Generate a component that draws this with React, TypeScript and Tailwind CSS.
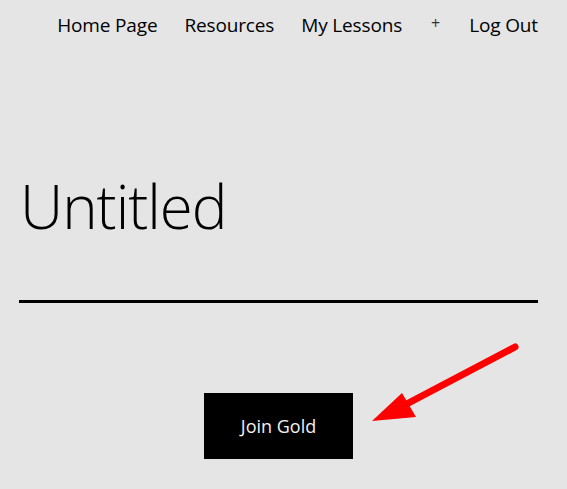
import React from 'react';

const navItems = ['Home Page', 'Resources', 'My Lessons'];

const App: React.FC = () => {
  return (
    <div
      className="min-h-[489px] w-[567px] bg-[#e5e5e5] text-black pl-[19px] pr-[29px]"
      style={{ fontFamily: '"Segoe UI", "Open Sans", "Noto Sans", sans-serif' }}
    >
      <nav className="flex items-center justify-end pt-[6px] h-[45px] text-[19px] gap-[27px]">
        {navItems.map((item) => (
          <a key={item} className="leading-none tracking-[-0.15px]">
            {item}
          </a>
        ))}
        <span className="text-[16px] leading-none text-[#333] -mt-[6px] mx-[2px]">+</span>
        <a className="leading-none tracking-[-0.15px]">Log Out</a>
      </nav>

      <h1 className="mt-[131px] text-[60px] font-light leading-none tracking-[-1px] pl-[1px]">Untitled</h1>

      <div className="mt-[64px] h-[3px] bg-black" />

      <div className="relative mt-[90px] flex justify-center">
        <button className="bg-black text-[#f0f0f0] text-[18px] w-[149px] h-[66px] flex items-center justify-center">
          Join Gold
        </button>
        <svg
          className="absolute left-[340px] -top-[51px]"
          width="170"
          height="90"
          viewBox="0 0 170 90"
        >
          <line x1="156" y1="5" x2="40" y2="66" stroke="#ff0000" strokeWidth="7" strokeLinecap="round" />
          <polygon points="13,79 43,51 57,75" fill="#ff0000" />
        </svg>
      </div>
    </div>
  );
};

export default App;
